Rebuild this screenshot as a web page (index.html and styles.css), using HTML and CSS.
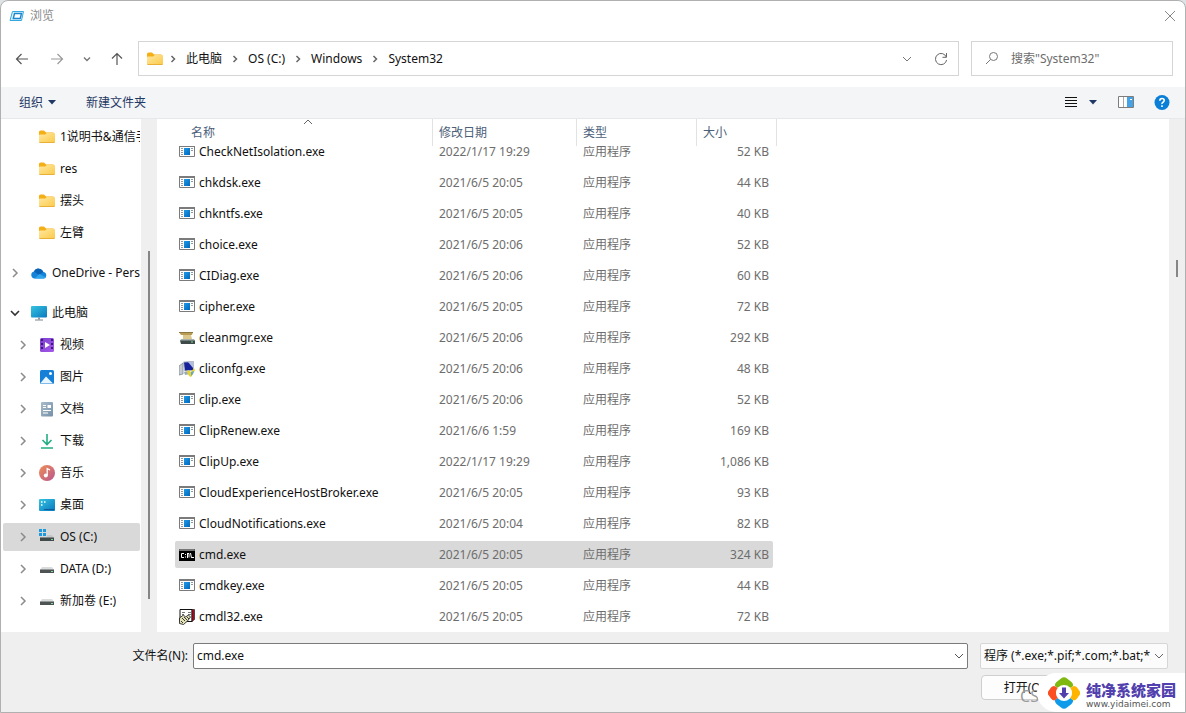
FILE: index.html
```html
<!DOCTYPE html>
<html lang="zh-CN">
<head>
<meta charset="utf-8">
<title>浏览</title>
<link rel="stylesheet" href="styles.css">
</head>
<body>
<svg class="defs" aria-hidden="true">
  <defs>
    <linearGradient id="g-folder" x1="0" y1="0" x2="1" y2="1"><stop offset="0" stop-color="#ffe8a0"/><stop offset="1" stop-color="#fbc948"/></linearGradient>
    <linearGradient id="g-blue" x1="0" y1="0" x2="1" y2="1"><stop offset="0" stop-color="#35c4e0"/><stop offset="1" stop-color="#0a78c0"/></linearGradient>
    <linearGradient id="g-app" x1="0" y1="0" x2="1" y2="1"><stop offset="0" stop-color="#1f9ae6"/><stop offset="1" stop-color="#0067bd"/></linearGradient>
    <linearGradient id="g-video" x1="0" y1="0" x2="1" y2="1"><stop offset="0" stop-color="#7b3fd0"/><stop offset="1" stop-color="#a558e8"/></linearGradient>
    <linearGradient id="g-music" x1="0" y1="0" x2="1" y2="1"><stop offset="0" stop-color="#ef8f55"/><stop offset="1" stop-color="#b9558f"/></linearGradient>
    <linearGradient id="g-doc" x1="0" y1="0" x2="1" y2="1"><stop offset="0" stop-color="#a9bccb"/><stop offset="1" stop-color="#7590a8"/></linearGradient>
    <symbol id="folder" viewBox="0 0 16 16"><path d="M0 3q0-1.500 1.500-1.500H5l2 2h7q1.500 0 1.500 1.500v4H0z" fill="#f5ae13"/><path d="M0 6.500q0-1 1-1h5L8 4h6.500q1.500 0 1.500 1.500V13q0 1-1.500 1h-13Q0 14 0 13z" fill="url(#g-folder)"/><path d="M.5 13.500h15" stroke="#e9b039"/></symbol>
    <symbol id="chev" viewBox="0 0 16 16"><path d="M6 4l4 4-4 4" fill="none" stroke="currentColor" stroke-width="1.500"/></symbol>
    <symbol id="crumb" viewBox="0 0 16 16"><path d="M6.500 5l3 3-3 3" fill="none" stroke="currentColor" stroke-width="1.500"/></symbol>
    <symbol id="down" viewBox="0 0 16 16"><path d="M4 6l4 4 4-4" fill="none" stroke="currentColor"/></symbol>
    <symbol id="app" viewBox="0 0 16 16"><path d="M.5 1.500h15v11H.5z" fill="#fff" stroke="#7b7b7b"/><path d="M0 1h16v2H0z" fill="#7b7b7b"/><path d="M5 4h6v7H5z" fill="url(#g-app)"/><path d="M2 4.500h2M2 6.500h2M2 8.500h2M2 10.500h2M12 4.500h2M12 6.500h2" stroke="#8d9aa5"/></symbol>
    <symbol id="cleanmgr" viewBox="0 0 16 16"><path d="M0 2h14l-1 3H2z" fill="#b99d55"/><path d="M0 2h14v1H0z" fill="#8c7740"/><path d="M4 5h8l1 4H4z" fill="#dcc88b"/><path d="M2 9h13l1 2H1z" fill="#a7b0ac"/><path d="M1 10.500h15V14H2z" fill="#3d4a49"/><path d="M12 12h2" stroke="#7fe08c"/></symbol>
    <symbol id="cliconfg" viewBox="0 0 16 16"><path d="M0 5l4-3v11l-4 1z" fill="#c5cbd1" stroke="#74818c" stroke-width=".7"/><path d="M4.500 1L14.500.5v9l-9 .5z" fill="#17219a" stroke="#b8bec8"/><path d="M9 1h5v6z" fill="#b4bde2"/><path d="M5 11l5-1 1 3-5 1z" fill="#9ca9b4"/><path d="M9 9l3 2 3-4 1 2-2 4-2 3-2-1-2-4z" fill="#e8d32d"/><path d="M12 11l3-1-1 3-2 2z" fill="#62a6d4"/></symbol>
    <symbol id="cmd" viewBox="0 0 16 16"><path d="M0 2h16v12H0z" fill="#000"/><path d="M.5 2.500h15v1H.5z" fill="#d4d4d4" stroke="#777"/><path d="M5 6.500H2.500v4H5M6.500 7v1m0 1.500v1M8.500 6v5M8.500 6.500h1.500v4M11.500 6l1 5M13 10.500h2" fill="none" stroke="#fff"/></symbol>
    <symbol id="cmdl" viewBox="0 0 16 16"><path d="M1 .5h12v12H1z" fill="#fff" stroke="#111"/><path d="M13 .5h2.500v10l-2.500 2z" fill="#a30f22" stroke="#111" stroke-width=".6"/><path d="M3 3.500h3m3 0h3M3 5.500h2m4 0h3" stroke="#777"/><path d="M.5 9l4-3 2 2 3-2 2 2-3 4-4 3.500-4-1z" fill="#e2e0b8" stroke="#111" stroke-width=".8"/><path d="M3 9l3 3M5 8l3 3M8 8l2 2M2 12l2 2" stroke="#111" stroke-width=".8"/></symbol>
    <symbol id="drive" viewBox="0 0 16 16"><path d="M3 6h10l2 3H1z" fill="#dadcdc"/><path d="M1 8.500h14V12H1z" fill="#4e5454"/><path d="M12 10.500h2" stroke="#7fd3a0"/></symbol>
  </defs>
</svg>
<main class="window">
  <header class="titlebar">
    <svg class="icon" viewBox="0 0 16 16"><path d="M3.500 3.500h11l-2 9H1z" fill="#d8f3fb" stroke="#35a9df"/><path d="M5.500 5.500h7l-1.300 5H4.300z" fill="#fff" stroke="#1d86cf" stroke-width="1.400"/></svg>
    <h1>浏览</h1>
    <button class="close" aria-label="关闭"><svg class="icon" viewBox="0 0 16 16"><path d="M3 3l10 10M13 3L3 13" stroke="#888"/></svg></button>
  </header>

  <nav class="navrow">
    <div class="history">
      <button aria-label="后退"><svg class="icon" viewBox="0 0 16 16"><path d="M14 8H2.500M7.500 3l-5 5 5 5" fill="none" stroke="#555" stroke-width="1.200"/></svg></button>
      <button aria-label="前进"><svg class="icon" viewBox="0 0 16 16"><path d="M2 8h11.500M8.500 3l5 5-5 5" fill="none" stroke="#999" stroke-width="1.200"/></svg></button>
      <button class="recent" aria-label="最近"><svg class="icon" viewBox="0 0 16 16"><path d="M5 6.500l3 3 3-3" fill="none" stroke="#777" stroke-width="1.400"/></svg></button>
      <button aria-label="向上"><svg class="icon" viewBox="0 0 16 16"><path d="M8 14V2.500M3 7.500l5-5 5 5" fill="none" stroke="#555" stroke-width="1.200"/></svg></button>
    </div>
    <div class="address">
      <svg class="icon"><use href="#folder"/></svg>
      <svg class="icon sep"><use href="#crumb"/></svg><a href="#">此电脑</a>
      <svg class="icon sep"><use href="#crumb"/></svg><a href="#">OS (C:)</a>
      <svg class="icon sep"><use href="#crumb"/></svg><a href="#">Windows</a>
      <svg class="icon sep"><use href="#crumb"/></svg><a href="#">System32</a>
      <button class="history-drop" aria-label="展开"><svg class="icon"><use href="#down"/></svg></button>
      <button aria-label="刷新"><svg class="icon" viewBox="0 0 16 16"><path d="M13.300 6A5.600 5.600 0 1 0 13.600 9M13.500 2v4.300H9.500" fill="none" stroke="#666"/></svg></button>
    </div>
    <label class="search">
      <svg class="icon" viewBox="0 0 16 16"><circle cx="9.500" cy="5.500" r="4" fill="none" stroke="#777"/><path d="M6.500 8.500L2 13" stroke="#777"/></svg>
      <input type="text" aria-label="搜索" placeholder='搜索"System32"'>
    </label>
  </nav>

  <div class="toolbar">
    <button>组织<svg class="caret" viewBox="0 0 8 5"><path d="M0 0h8L4 4.500z"/></svg></button>
    <button>新建文件夹</button>
    <button class="view" aria-label="视图"><svg class="icon" viewBox="0 0 16 16"><path d="M2 2.500h12M2 5.500h12M2 8.500h12M2 11.500h12" stroke="#111"/></svg><svg class="caret" viewBox="0 0 8 5"><path d="M0 0h8L4 4.500z"/></svg></button>
    <button aria-label="预览窗格"><svg class="icon" viewBox="0 0 16 16"><path d="M.5 1.500h15v11H.5z" fill="#fff" stroke="#7d7d7d"/><path d="M5.500 2v10" stroke="#aaa"/><path d="M9 2h6v10H9z" fill="#45a2e4"/><path d="M12 4.500h2" stroke="#fff"/></svg></button>
    <button aria-label="帮助"><svg class="icon" viewBox="0 0 16 16"><circle cx="8" cy="7.500" r="7.500" fill="#0a7fd8"/><path d="M5.800 5.800q0-2.300 2.200-2.300t2.200 2q0 1-1.200 1.700T8 9M8 10.200v1.800" fill="none" stroke="#fff" stroke-width="1.600"/></svg></button>
  </div>

  <div class="panes">
    <aside class="tree">
      <ul>
        <li class="item pinned"><svg class="icon"><use href="#folder"/></svg>1说明书&amp;通信手册</li>
        <li class="item pinned"><svg class="icon"><use href="#folder"/></svg>res</li>
        <li class="item pinned"><svg class="icon"><use href="#folder"/></svg>摆头</li>
        <li class="item pinned"><svg class="icon"><use href="#folder"/></svg>左臂</li>
      </ul>
      <ul>
        <li class="item root"><svg class="icon arrow"><use href="#chev"/></svg><svg class="icon" viewBox="0 0 16 16"><path d="M3.500 13.500a3.500 3.500 0 0 1-.5-6.900A5 5 0 0 1 12.300 7a3.300 3.300 0 0 1 .4 6.500z" fill="#1483d8"/><path d="M3 6.600A5 5 0 0 1 12.300 7L8 10z" fill="#0b62b5"/><path d="M3.500 13.500L8.500 9l6.500 3.500q-1 1-2.300 1z" fill="#2fa5ee"/></svg>OneDrive - Personal</li>
      </ul>
      <ul>
        <li class="item root"><svg class="icon arrow expanded" viewBox="0 0 16 16"><path d="M4 6l4 4 4-4" fill="none" stroke="currentColor" stroke-width="1.600"/></svg><svg class="icon" viewBox="0 0 16 16"><rect y="1" width="16" height="11.500" rx="1" fill="url(#g-blue)"/><path d="M7 12.500h2v2H7z" fill="#8c989f"/><path d="M4 15h8" stroke="#7b868c"/></svg>此电脑</li>
        <li class="item"><svg class="icon arrow"><use href="#chev"/></svg><svg class="icon" viewBox="0 0 16 16"><rect x="1" y="1" width="14" height="14" rx="1.500" fill="url(#g-video)"/><path d="M3 2v12M13 2v12" stroke="#35156d" stroke-width="1.800" stroke-dasharray="2"/><path d="M6 5l5 3-5 3z" fill="#fff"/></svg>视频</li>
        <li class="item"><svg class="icon arrow"><use href="#chev"/></svg><svg class="icon" viewBox="0 0 16 16"><rect x="1" y="1" width="14" height="14" rx="1.500" fill="#1680d8"/><path d="M1.500 14L7 7.500 14 14.500H2z" fill="#e9f6ff"/><circle cx="11.500" cy="4.500" r="1.500" fill="#fff"/></svg>图片</li>
        <li class="item"><svg class="icon arrow"><use href="#chev"/></svg><svg class="icon" viewBox="0 0 16 16"><rect x="2" y="1" width="12" height="14.500" rx="1" fill="url(#g-doc)"/><path d="M4 4.500h3M4 6.500h3M4 9.500h8M4 12h5" stroke="#fff"/><path d="M8.500 4h3.500v3H8.500z" fill="#fff"/></svg>文档</li>
        <li class="item"><svg class="icon arrow"><use href="#chev"/></svg><svg class="icon" viewBox="0 0 16 16"><path d="M8 1v10.500M3.500 7L8 11.500 12.500 7M2 15h12" fill="none" stroke="#22ad82" stroke-width="1.600"/></svg>下载</li>
        <li class="item"><svg class="icon arrow"><use href="#chev"/></svg><svg class="icon" viewBox="0 0 16 16"><circle cx="8" cy="8" r="8" fill="url(#g-music)"/><circle cx="6.800" cy="10.500" r="2" fill="#fff"/><path d="M8.200 10.500V3.500L11 5" fill="none" stroke="#fff" stroke-width="1.300"/></svg>音乐</li>
        <li class="item"><svg class="icon arrow"><use href="#chev"/></svg><svg class="icon" viewBox="0 0 16 16"><rect y="2" width="16" height="12" rx="1" fill="url(#g-blue)"/><path d="M2 5h1.500M2 8h1.500M5 5h1.500" stroke="#fff" stroke-width="1.500"/><path d="M5 12.500h10" stroke="#0b5d99"/></svg>桌面</li>
        <li class="item selected"><svg class="icon arrow"><use href="#chev"/></svg><svg class="icon" viewBox="0 0 16 16"><path d="M0 0h3v3H0zM4 0h3v3H4zM0 4h3v3H0zM4 4h3v3H4z" fill="#1c9ae0"/><path d="M8 6h5l2 3H1V8h7z" fill="#c4c8c8"/><path d="M1 8.500h14V12H1z" fill="#434b4a"/><path d="M12 10.500h2" stroke="#7fd3a0"/></svg>OS (C:)</li>
        <li class="item"><svg class="icon arrow"><use href="#chev"/></svg><svg class="icon"><use href="#drive"/></svg>DATA (D:)</li>
        <li class="item"><svg class="icon arrow"><use href="#chev"/></svg><svg class="icon"><use href="#drive"/></svg>新加卷 (E:)</li>
      </ul>
    </aside>
    <div class="track tree-track"><div class="thumb"></div></div>
    <section class="files">
      <table>
        <thead><tr><th>名称<svg class="sort" viewBox="0 0 10 6"><path d="M1 5l4-4 4 4" fill="none" stroke="#666"/></svg></th><th>修改日期</th><th>类型</th><th>大小</th></tr></thead>
        <tbody>
          <tr><td><svg class="icon"><use href="#app"/></svg>CheckNetIsolation.exe</td><td>2022/1/17 19:29</td><td>应用程序</td><td>52 KB</td></tr>
          <tr><td><svg class="icon"><use href="#app"/></svg>chkdsk.exe</td><td>2021/6/5 20:05</td><td>应用程序</td><td>44 KB</td></tr>
          <tr><td><svg class="icon"><use href="#app"/></svg>chkntfs.exe</td><td>2021/6/5 20:05</td><td>应用程序</td><td>40 KB</td></tr>
          <tr><td><svg class="icon"><use href="#app"/></svg>choice.exe</td><td>2021/6/5 20:06</td><td>应用程序</td><td>52 KB</td></tr>
          <tr><td><svg class="icon"><use href="#app"/></svg>CIDiag.exe</td><td>2021/6/5 20:06</td><td>应用程序</td><td>60 KB</td></tr>
          <tr><td><svg class="icon"><use href="#app"/></svg>cipher.exe</td><td>2021/6/5 20:05</td><td>应用程序</td><td>72 KB</td></tr>
          <tr><td><svg class="icon"><use href="#cleanmgr"/></svg>cleanmgr.exe</td><td>2021/6/5 20:06</td><td>应用程序</td><td>292 KB</td></tr>
          <tr><td><svg class="icon"><use href="#cliconfg"/></svg>cliconfg.exe</td><td>2021/6/5 20:06</td><td>应用程序</td><td>48 KB</td></tr>
          <tr><td><svg class="icon"><use href="#app"/></svg>clip.exe</td><td>2021/6/5 20:06</td><td>应用程序</td><td>52 KB</td></tr>
          <tr><td><svg class="icon"><use href="#app"/></svg>ClipRenew.exe</td><td>2021/6/6 1:59</td><td>应用程序</td><td>169 KB</td></tr>
          <tr><td><svg class="icon"><use href="#app"/></svg>ClipUp.exe</td><td>2022/1/17 19:29</td><td>应用程序</td><td>1,086 KB</td></tr>
          <tr><td><svg class="icon"><use href="#app"/></svg>CloudExperienceHostBroker.exe</td><td>2021/6/5 20:05</td><td>应用程序</td><td>93 KB</td></tr>
          <tr><td><svg class="icon"><use href="#app"/></svg>CloudNotifications.exe</td><td>2021/6/5 20:04</td><td>应用程序</td><td>82 KB</td></tr>
          <tr class="selected"><td><svg class="icon"><use href="#cmd"/></svg>cmd.exe</td><td>2021/6/5 20:05</td><td>应用程序</td><td>324 KB</td></tr>
          <tr><td><svg class="icon"><use href="#app"/></svg>cmdkey.exe</td><td>2021/6/5 20:05</td><td>应用程序</td><td>44 KB</td></tr>
          <tr><td><svg class="icon"><use href="#cmdl"/></svg>cmdl32.exe</td><td>2021/6/5 20:05</td><td>应用程序</td><td>72 KB</td></tr>
        </tbody>
      </table>
    </section>
    <div class="track files-track"><div class="thumb"></div></div>
  </div>

  <footer class="footer">
    <div class="fields">
      <label for="filename">文件名(N):</label>
      <div class="combo"><input id="filename" type="text" value="cmd.exe"><button aria-label="文件名列表"><svg class="icon"><use href="#down"/></svg></button></div>
      <div class="filter"><select aria-label="文件类型"><option>程序 (*.exe;*.pif;*.com;*.bat;*.cmd)</option></select><svg class="icon"><use href="#down"/></svg></div>
    </div>
    <div class="actions"><button class="confirm">打开(O)</button></div>
  </footer>
  <span class="credit">CS</span>
  <div class="brand">
    <svg class="logo" viewBox="0 0 32 32"><path d="M7 9Q6.500 7 8.500 5L13 1.500Q16-1 19 1.500L23.500 5Q25.500 7 25 9L21.500 11.500Q16 6 10.500 11.500z" fill="#7fb80f"/><path d="M7 23Q6.500 25 8.500 27L13 30.500Q16 33 19 30.500L23.500 27Q25.500 25 25 23L21.500 20.500Q16 26 10.500 20.500z" fill="#0f9bea"/><path d="M6 9Q8 9 10 11.500Q6.500 16 10 20.500Q8 23 6 23.500Q4 23 3 21.500L.5 18Q-1 16 .5 14L3 10.500Q4 9 6 9z" fill="#fb4f22"/><path d="M26 9Q24 9 22 11.500Q25.500 16 22 20.500Q24 23 26 23.500Q28 23 29 21.500L31.500 18Q33 16 31.500 14L29 10.500Q28 9 26 9z" fill="#ffb400"/><circle cx="16" cy="16" r="8" fill="#fff"/><path d="M14 10.500h4V16h3L16 21.500 11 16h3z" fill="#5140ad"/></svg>
    <div class="brand-text"><strong>纯净系统家园</strong><small>www.yidaimei.com</small></div>
  </div>
</main>
</body>
</html>
```
FILE: styles.css
```css
* { box-sizing: border-box; }
html, body { height: 100%; }
body {
  margin: 0;
  background: #dfe3e6;
  color: #111;
  font: 12px/16px "Noto Sans", "Noto Sans CJK SC", sans-serif;
}
button, input, select { font: inherit; color: inherit; }
button { border: 0; padding: 0; background: none; display: flex; align-items: center; }
ul { list-style: none; margin: 0; padding: 0; }
a { color: inherit; text-decoration: none; }
.defs { position: absolute; width: 0; height: 0; }
.icon { width: 16px; height: 16px; flex: none; display: block; }

.window {
  position: relative;
  min-height: 100vh;
  display: flex;
  flex-direction: column;
  border: 1px solid #b0b0b0;
  border-radius: 8px 8px 0 0;
  background: #fff;
  overflow: hidden;
}

.titlebar { display: flex; align-items: center; gap: 5px; height: 29px; padding: 0 7px 0 8px; }
.titlebar h1 { margin: 0; font-size: 12px; font-weight: 400; color: #8a8a8a; }
.close { margin-left: auto; }

.navrow { display: flex; height: 57px; padding: 11px 12px; }
.history { display: flex; align-items: center; gap: 19px; width: 125px; padding-left: 1px; }
.history .recent { margin: 0 -5px; }
.address { flex: 1; display: flex; align-items: center; padding: 0 9px 0 8px; border: 1px solid #d5d5d5; white-space: nowrap; }
.address .sep { margin: 0 5px; color: #666; }
.address .icon:first-child + .sep { margin-left: 2px; }
.history-drop { margin: 0 18px 0 auto; color: #777; }
.search { display: flex; align-items: center; gap: 11px; width: 202px; margin-left: 12px; padding: 0 13px 0 12px; border: 1px solid #d5d5d5; }
.search input { flex: 1; min-width: 0; border: 0; padding: 0; outline: 0; background: none; }
.search input::placeholder { color: #6d6d6d; opacity: 1; }

.toolbar { display: flex; align-items: center; gap: 30px; height: 32px; padding: 0 15px 0 18px; background: #f3f5f7; border-bottom: 1px solid #e6e8eb; color: #1f3864; }
.toolbar .caret { width: 8px; height: 5px; margin-left: 5px; fill: #1f3864; }
.toolbar .view { margin-left: auto; margin-right: -9px; }
.toolbar .view .caret { margin-left: 10px; }
.toolbar button:last-child { margin-left: -10px; }

.panes { flex: 1; display: flex; min-height: 0; background: #efefef; }
.tree { width: 140px; padding: 2px 1px 0 2px; background: #fff; overflow: hidden; }
.tree ul + ul { padding-top: 6px; }
.item { display: flex; align-items: center; gap: 5px; height: 28px; margin: 2px 0 4px; padding-left: 12px; white-space: nowrap; overflow: hidden; }
.item.pinned { padding-left: 36px; }
.item.root { padding-left: 4px; }
.item .arrow { color: #8b8b8b; margin-right: 3px; }
.item .arrow.expanded { color: #333; }
.item.selected { background: #d9d9d9; border-radius: 2px; }
.track { width: 16px; }
.thumb { width: 2px; background: #868686; margin-left: 7px; }
.tree-track .thumb { margin-top: 132px; height: 348px; }
.files-track .thumb { margin-top: 141px; height: 17px; }
.files { flex: 1; padding-left: 18px; background: #fff; overflow: hidden; }

table, thead, tbody { display: block; }
tbody { overflow: hidden; }
tr { display: grid; grid-template-columns: 258px 144px 120px 80px; }
th { position: relative; height: 27px; padding: 6px 6px 0; border-right: 1px solid #e2e2e2; text-align: left; font-weight: 400; color: #4c607a; }
th:first-child { padding-left: 16px; }
.sort { position: absolute; left: 128px; top: 0; width: 10px; height: 6px; }
tbody tr { width: 598px; height: 27px; margin: 4px 0; align-items: center; border-radius: 2px; grid-template-columns: 258px 144px 120px 72px; }
tbody tr:first-child { margin-top: -8px; }
tbody tr:last-child { margin-bottom: 2px; }
tbody tr.selected { background: #d9d9d9; }
td { padding: 0 6px; color: #6d6d6d; white-space: nowrap; }
td:first-child { display: flex; align-items: center; gap: 4px; padding: 0 4px; color: #111; }
td:last-child { padding: 0; text-align: right; }

.footer { display: flex; flex-direction: column; gap: 6px; min-height: 80px; padding: 11px 17px 0 0; background: #efefef; }
.fields { display: flex; align-items: center; }
.fields label { width: 192px; padding-right: 5px; text-align: right; }
.combo { flex: 1; display: flex; align-items: center; height: 26px; border: 1px solid #7b7b7b; border-radius: 2px; background: #fff; }
.combo input { flex: 1; min-width: 0; border: 0; padding: 0 3px; outline: 0; background: none; }
.combo button { color: #555; }
.filter { position: relative; width: 188px; margin-left: 12px; color: #111; }
.filter select { appearance: none; display: block; width: 100%; height: 26px; padding: 0 16px 0 3px; border: 1px solid #d6d6d6; border-radius: 2px; background: #fbfbfb; overflow: hidden; }
.filter .icon { position: absolute; right: 1px; top: 5px; color: #666; }
.actions { display: flex; justify-content: flex-end; }
.confirm { width: 86px; height: 25px; margin-right: 101px; justify-content: center; border: 1px solid #cfcfcf; border-radius: 4px; background: #fdfdfd; }

.credit { position: absolute; right: 146px; bottom: 8px; font-size: 16px; color: #9b9b9b; }
.brand { position: absolute; right: 0; bottom: 0; display: flex; align-items: center; gap: 6px; height: 39px; padding: 0 9px 0 11px; border-radius: 20px 0 0 20px; background: #fff; }
.logo { width: 32px; height: 32px; }
.brand-text { padding-top: 4px; }
.brand strong, .brand small { display: block; white-space: nowrap; }
.brand strong { font-size: 15px; line-height: 18px; font-weight: 900; color: #5140ad; }
.brand small { font: 9px/10px "DejaVu Sans", sans-serif; color: #555; }
```
